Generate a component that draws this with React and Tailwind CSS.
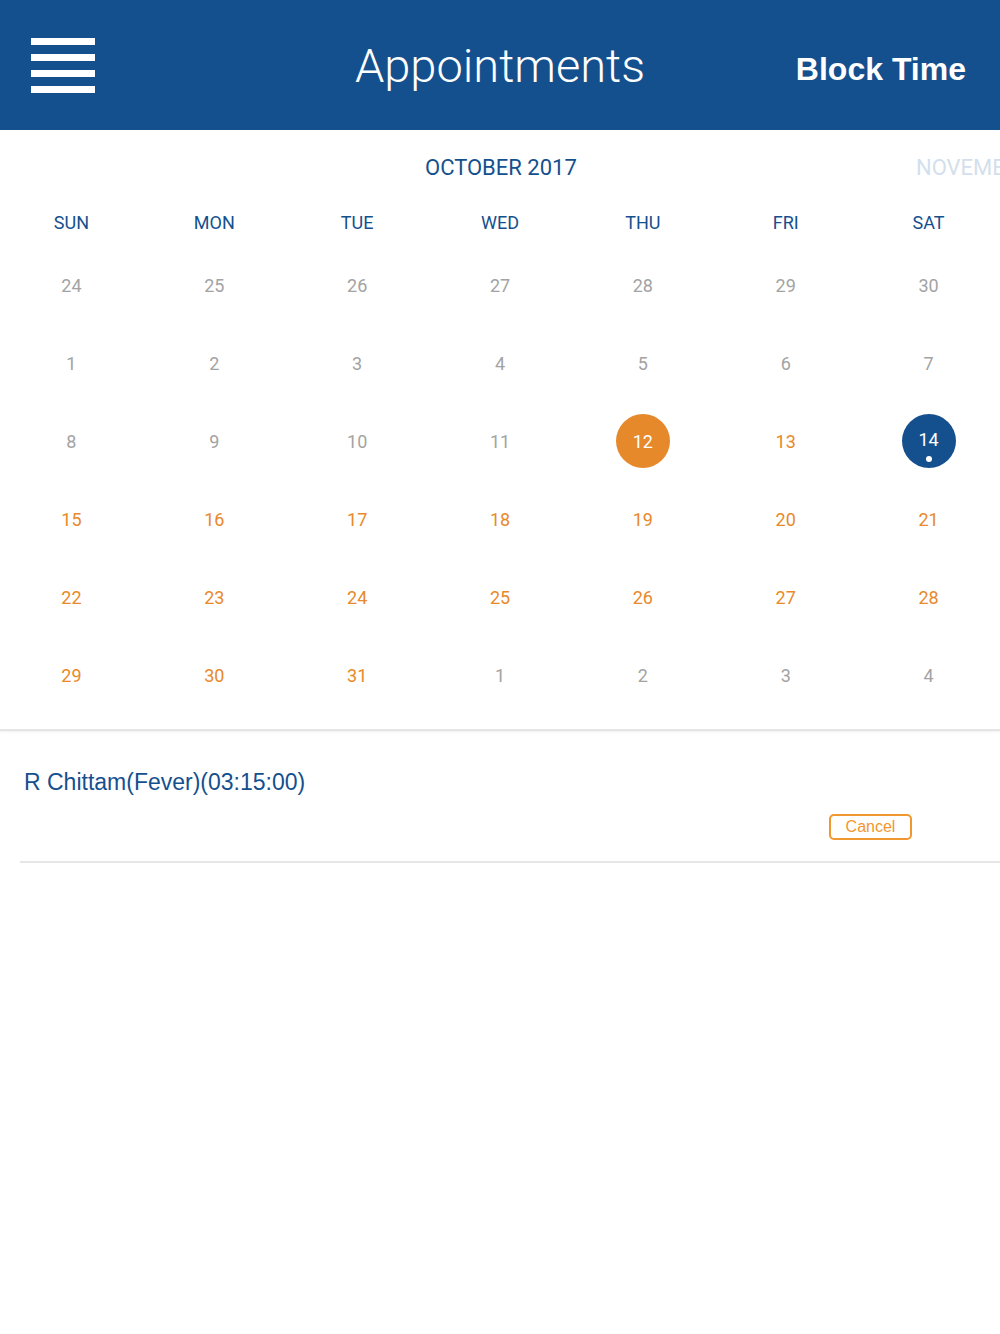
import React from 'react';

const DAYS = ['SUN', 'MON', 'TUE', 'WED', 'THU', 'FRI', 'SAT'];

// each cell: [label, kind] — kind: g = other/past day, o = upcoming, sel = selected, today = marked
const WEEKS = [
  [['24', 'g'], ['25', 'g'], ['26', 'g'], ['27', 'g'], ['28', 'g'], ['29', 'g'], ['30', 'g']],
  [['1', 'g'], ['2', 'g'], ['3', 'g'], ['4', 'g'], ['5', 'g'], ['6', 'g'], ['7', 'g']],
  [['8', 'g'], ['9', 'g'], ['10', 'g'], ['11', 'g'], ['12', 'sel'], ['13', 'o'], ['14', 'today']],
  [['15', 'o'], ['16', 'o'], ['17', 'o'], ['18', 'o'], ['19', 'o'], ['20', 'o'], ['21', 'o']],
  [['22', 'o'], ['23', 'o'], ['24', 'o'], ['25', 'o'], ['26', 'o'], ['27', 'o'], ['28', 'o']],
  [['29', 'o'], ['30', 'o'], ['31', 'o'], ['1', 'g'], ['2', 'g'], ['3', 'g'], ['4', 'g']],
];

const DayCell = ({ label, kind }) => {
  if (kind === 'sel') {
    return (
      <div className="w-[54px] h-[54px] rounded-full bg-[#e6892a] flex items-center justify-center text-white">
        {label}
      </div>
    );
  }
  if (kind === 'today') {
    return (
      <div className="relative w-[54px] h-[54px] rounded-full bg-[#15508e] flex items-center justify-center text-white">
        <span className="-mt-[4px]">{label}</span>
        <span className="absolute bottom-[6px] left-1/2 -ml-[3px] w-[6px] h-[6px] rounded-full bg-white"></span>
      </div>
    );
  }
  return <span className={kind === 'o' ? 'text-[#e8892a]' : 'text-[#a3a3a3]'}>{label}</span>;
};

const App = () => {
  return (
    <div className="w-[1000px] min-h-[1334px] bg-white font-['Roboto',sans-serif]">
      {/* Top bar */}
      <div className="h-[130px] bg-[#15508e] grid grid-cols-[1fr_auto_1fr] items-center text-white">
        <div className="pl-[31px] flex flex-col gap-[9px]">
          <div className="w-[64px] h-[7px] bg-white"></div>
          <div className="w-[64px] h-[7px] bg-white"></div>
          <div className="w-[64px] h-[7px] bg-white"></div>
          <div className="w-[64px] h-[7px] bg-white"></div>
        </div>
        <h1 className="text-[47px] font-light leading-none font-['Roboto',sans-serif]">Appointments</h1>
        <div className="flex justify-end pr-[34px]">
          <button type="button" className="text-[32px] font-bold leading-none mt-[8px] font-['Liberation_Sans',sans-serif]">
            Block Time
          </button>
        </div>
      </div>

      {/* Month title */}
      <div className="h-[74px] flex items-center overflow-hidden whitespace-nowrap text-[22px]">
        <div className="w-[916px] shrink-0 pl-[425px] text-[#15508e]">OCTOBER 2017</div>
        <div className="shrink-0 text-[#d3dfec]">NOVEMBER 2017</div>
      </div>

      {/* Weekday header */}
      <div className="grid grid-cols-7 h-[36px] items-center text-[18px] text-[#15508e]">
        {DAYS.map((d) => (
          <div key={d} className="text-center">{d}</div>
        ))}
      </div>

      {/* Dates */}
      <div className="mt-[6px] pb-[15px] border-b-2 border-[#e4e4e4] shadow-[0_1px_2px_rgba(0,0,0,0.06)]">
        {WEEKS.map((week, i) => (
          <div key={i} className="grid grid-cols-7 h-[78px] items-center text-[18px]">
            {week.map(([label, kind], j) => (
              <div key={j} className="flex justify-center">
                <DayCell label={label} kind={kind} />
              </div>
            ))}
          </div>
        ))}
      </div>

      {/* Appointment list */}
      <div className="ml-[20px] border-b-2 border-[#e6e6e6] pt-[38px] pb-[21px] font-['Liberation_Sans',sans-serif]">
        <div className="pl-[4px] text-[23px] leading-[26px] text-[#15508e]">R Chittam(Fever)(03:15:00)</div>
        <div className="flex justify-end pr-[88px] mt-[19px]">
          <button
            type="button"
            className="w-[83px] h-[26px] border-2 border-[#f0972f] rounded-[5px] text-[16px] leading-none text-[#f0972f]"
          >
            Cancel
          </button>
        </div>
      </div>
    </div>
  );
};

export default App;
